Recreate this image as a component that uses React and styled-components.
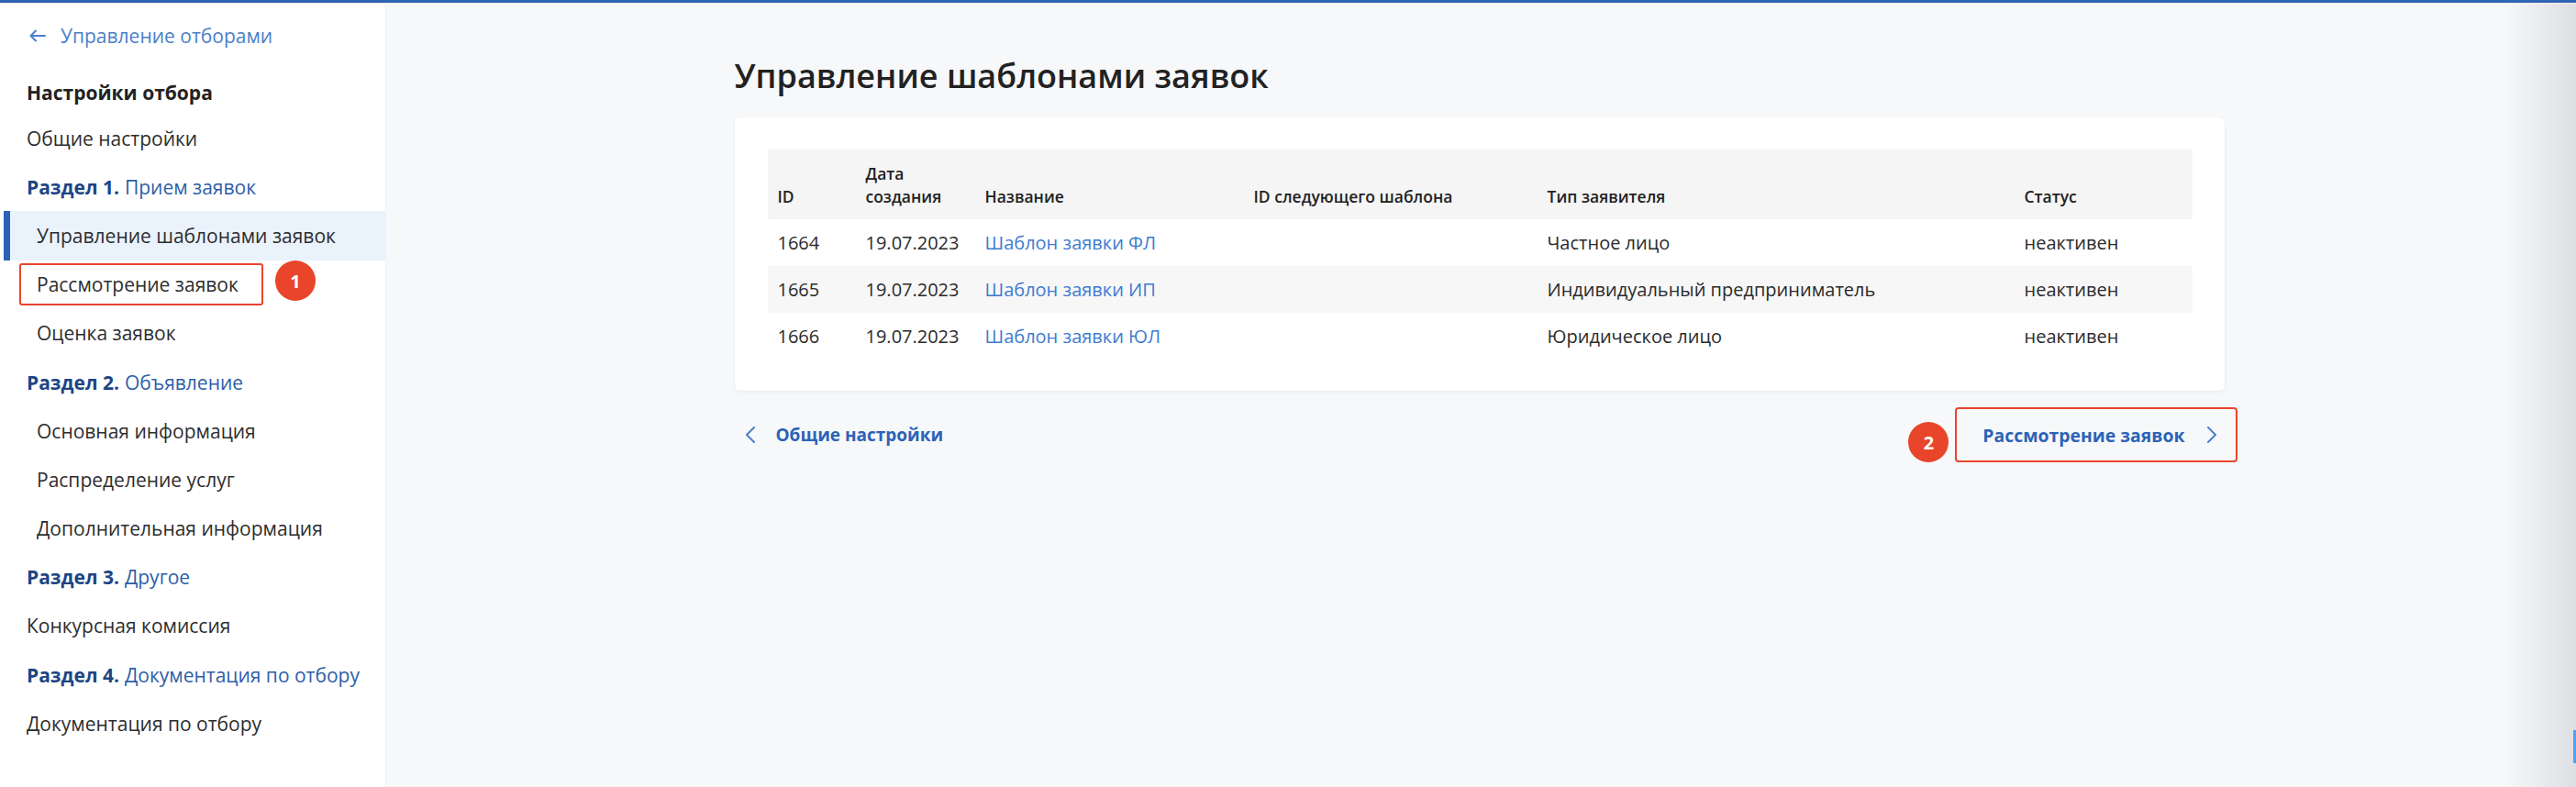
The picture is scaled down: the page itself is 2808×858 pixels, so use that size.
import React from 'react';
import styled, { createGlobalStyle } from 'styled-components';

const GlobalStyle = createGlobalStyle`
  html, body {
    margin: 0;
    padding: 0;
    background: #ffffff;
  }
  body {
    font-family: 'Open Sans', 'Noto Sans', 'Liberation Sans', sans-serif;
    color: #2b2b2b;
  }
`;

// каркас страницы
const Page = styled.div`
  width: 2808px;
  height: 858px;
  display: flex;
  flex-direction: column;
  overflow: hidden;
`;

const TopLine = styled.div`
  height: 3px;
  background: #2f63b4;
  border-bottom: 1px solid #f6ecea;
`;

const Body = styled.div`
  flex: 1;
  display: flex;
`;

// левое меню
const Sidebar = styled.nav`
  width: 416px;
  padding-left: 4px;
  background: #ffffff;
  border-right: 1px solid #f0f1f3;
  display: flex;
  flex-direction: column;
`;

const BackLink = styled.a`
  height: 70px;
  margin-bottom: 3px;
  padding-left: 28px;
  display: flex;
  align-items: center;
  gap: 16px;
  font-size: 21px;
  color: #4a7fc9;
  text-decoration: none;
`;

const MenuTitle = styled.div`
  height: 47px;
  padding-left: 25px;
  display: flex;
  align-items: center;
  font-size: 21px;
  font-weight: 700;
  color: #222;
`;

const MenuItem = styled.div`
  height: 53.2px;
  box-sizing: border-box;
  display: flex;
  align-items: center;
  font-size: 21px;
  color: #2d2d2d;
  padding-left: ${(props) => (props.sub ? '36px' : '25px')};
  background: ${(props) => (props.active ? '#eaf2fc' : 'transparent')};
  border-left: ${(props) => (props.active ? '7px solid #2a62b5' : 'none')};
  ${(props) => props.active && 'padding-left: 29px;'}
  ${(props) => props.marked && 'padding-left: 17px;'}
`;

const SectionItem = styled(MenuItem)`
  color: #2e5ea8;

  b {
    color: #1c4585;
    font-weight: 700;
    margin-right: 6px;
  }
`;

const Marked = styled.span`
  display: inline-flex;
  align-items: center;
  height: 46px;
  box-sizing: border-box;
  padding: 0 25px 0 17px;
  border: 2.5px solid #e8452b;
  border-radius: 3px;
`;

const Badge = styled.span`
  width: 44px;
  height: 44px;
  border-radius: 50%;
  background: #e8452b;
  color: #fff;
  font-size: 20px;
  font-weight: 700;
  display: inline-flex;
  align-items: center;
  justify-content: center;
  margin: ${(props) => props.margin || '0'};
  flex-shrink: 0;
`;

// правая часть
const Main = styled.main`
  flex: 1;
  position: relative;
  background: #f7f8fa;

  &::after {
    content: '';
    position: absolute;
    top: 0;
    right: 0;
    bottom: 0;
    width: 80px;
    background: linear-gradient(90deg, rgba(200, 202, 206, 0) 0%, rgba(200, 202, 206, 0.55) 100%);
    pointer-events: none;
  }
`;

const EdgeMark = styled.span`
  position: absolute;
  right: 0;
  top: 792px;
  width: 3px;
  height: 36px;
  background: #4aa3f5;
  z-index: 1;
`;

const Content = styled.div`
  width: 1624px;
  margin: 0 auto;
  padding-top: 57px;
  position: relative;
  left: -2px;
`;

const Title = styled.h1`
  margin: 0 0 23px;
  height: 44px;
  line-height: 44px;
  font-size: 36px;
  font-weight: 600;
  color: #222;
`;

const Card = styled.section`
  background: #fff;
  border-radius: 6px;
  box-shadow: 0 1px 4px rgba(0, 0, 0, 0.06);
  padding: 35px 35px 34px 36px;
`;

const Row = styled.div`
  display: grid;
  grid-template-columns: 96px 130px 293px 320px 520px 1fr;
  height: ${(props) => (props.head ? '76px' : '51px')};
  align-items: ${(props) => (props.head ? 'end' : 'center')};
  background: ${(props) => (props.head ? '#f5f5f6' : props.striped ? '#f7f7f8' : '#fff')};
`;

const HeadCell = styled.div`
  padding: 0 0 12px 11px;
  font-size: 17.5px;
  font-weight: 600;
  line-height: 25px;
  color: #222;
`;

const Cell = styled.div`
  padding-left: 11px;
  font-size: 20px;
  color: #2b2b2b;
  white-space: nowrap;
`;

const LinkCell = styled(Cell)`
  color: #3d7bd1;
`;

const NavRow = styled.div`
  margin-top: 18px;
  margin-right: -14px;
  display: flex;
  justify-content: space-between;
  align-items: center;
`;

const NavLink = styled.a`
  display: inline-flex;
  align-items: center;
  gap: 22px;
  height: 60px;
  padding-left: 12px;
  font-size: 19px;
  font-weight: 700;
  color: #2b63b8;
  text-decoration: none;
`;

const NextGroup = styled.div`
  display: flex;
  align-items: center;
`;

const NextButton = styled.a`
  display: inline-flex;
  align-items: center;
  gap: 24px;
  height: 60px;
  box-sizing: border-box;
  padding: 0 20px 0 28px;
  border: 2.5px solid #e8452b;
  border-radius: 4px;
  font-size: 19.4px;
  font-weight: 700;
  color: #2b63b8;
  text-decoration: none;
`;

function Chevron({ dir }) {
  const points = dir === 'left' ? '9,1 1,9 9,17' : '1,1 9,9 1,17';
  return (
    <svg width="11" height="18" viewBox="0 0 11 18">
      <polyline points={points} fill="none" stroke="#4a7fc9" strokeWidth="2" strokeLinecap="round" strokeLinejoin="round" />
    </svg>
  );
}

function BackArrow() {
  return (
    <svg width="18" height="14" viewBox="0 0 18 14">
      <path d="M17 7H2M7 1.5L1.5 7 7 12.5" fill="none" stroke="#4a7fc9" strokeWidth="2" strokeLinecap="round" strokeLinejoin="round" />
    </svg>
  );
}

const rows = [
  { id: '1664', date: '19.07.2023', name: 'Шаблон заявки ФЛ', type: 'Частное лицо', status: 'неактивен' },
  { id: '1665', date: '19.07.2023', name: 'Шаблон заявки ИП', type: 'Индивидуальный предприниматель', status: 'неактивен' },
  { id: '1666', date: '19.07.2023', name: 'Шаблон заявки ЮЛ', type: 'Юридическое лицо', status: 'неактивен' },
];

function Menu() {
  return (
    <Sidebar>
      <BackLink>
        <BackArrow />
        Управление отборами
      </BackLink>
      <MenuTitle>Настройки отбора</MenuTitle>
      <MenuItem>Общие настройки</MenuItem>
      <SectionItem>
        <b>Раздел 1.</b>Прием заявок
      </SectionItem>
      <MenuItem sub active>
        Управление шаблонами заявок
      </MenuItem>
      <MenuItem sub marked>
        <Marked>Рассмотрение заявок</Marked>
        <Badge margin="0 0 8px 13px">1</Badge>
      </MenuItem>
      <MenuItem sub>Оценка заявок</MenuItem>
      <SectionItem>
        <b>Раздел 2.</b>Объявление
      </SectionItem>
      <MenuItem sub>Основная информация</MenuItem>
      <MenuItem sub>Распределение услуг</MenuItem>
      <MenuItem sub>Дополнительная информация</MenuItem>
      <SectionItem>
        <b>Раздел 3.</b>Другое
      </SectionItem>
      <MenuItem>Конкурсная комиссия</MenuItem>
      <SectionItem>
        <b>Раздел 4.</b>Документация по отбору
      </SectionItem>
      <MenuItem>Документация по отбору</MenuItem>
    </Sidebar>
  );
}

export default function App() {
  return (
    <Page>
      <GlobalStyle />
      <TopLine />
      <Body>
        <Menu />
        <Main>
          <Content>
            <Title>Управление шаблонами заявок</Title>
            <Card>
              <Row head>
                <HeadCell>ID</HeadCell>
                <HeadCell>
                  Дата
                  <br />
                  создания
                </HeadCell>
                <HeadCell>Название</HeadCell>
                <HeadCell>ID следующего шаблона</HeadCell>
                <HeadCell>Тип заявителя</HeadCell>
                <HeadCell>Статус</HeadCell>
              </Row>
              {rows.map((r, i) => (
                <Row key={r.id} striped={i % 2 === 1}>
                  <Cell>{r.id}</Cell>
                  <Cell>{r.date}</Cell>
                  <LinkCell>{r.name}</LinkCell>
                  <Cell />
                  <Cell>{r.type}</Cell>
                  <Cell>{r.status}</Cell>
                </Row>
              ))}
            </Card>
            <NavRow>
              <NavLink>
                <Chevron dir="left" />
                Общие настройки
              </NavLink>
              <NextGroup>
                <Badge margin="16px 7px 0 0">2</Badge>
                <NextButton>
                  Рассмотрение заявок
                  <Chevron dir="right" />
                </NextButton>
              </NextGroup>
            </NavRow>
          </Content>
          <EdgeMark />
        </Main>
      </Body>
    </Page>
  );
}
